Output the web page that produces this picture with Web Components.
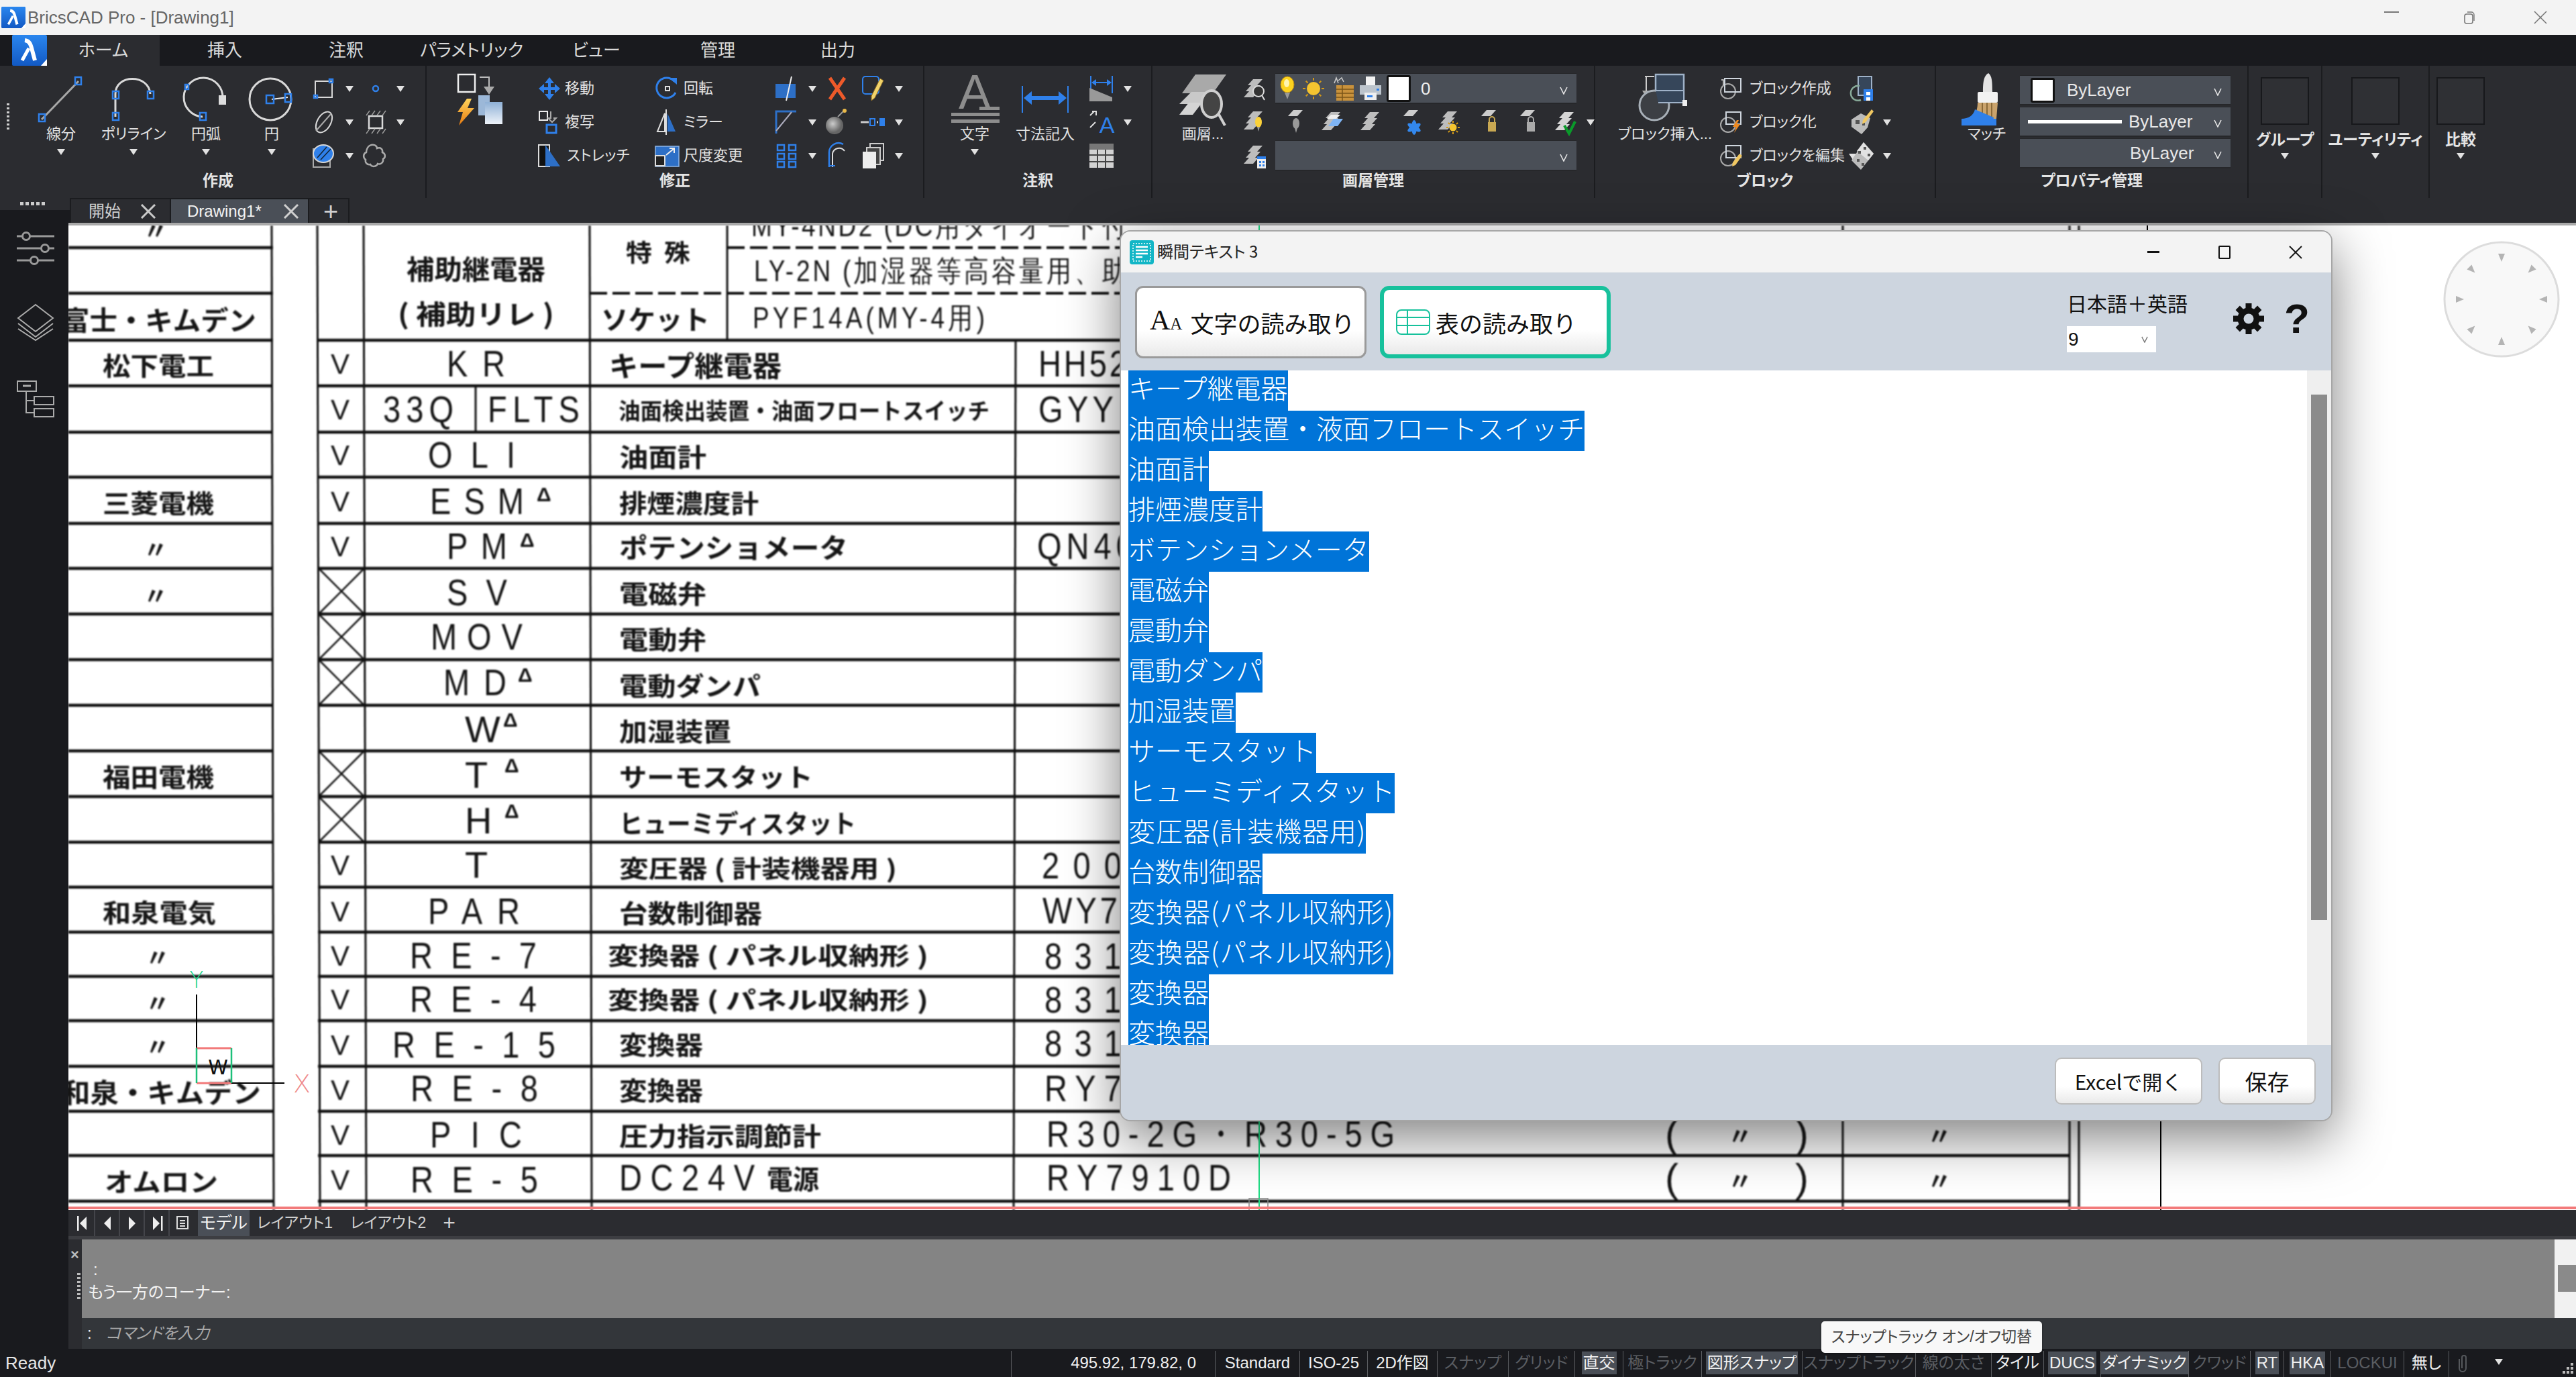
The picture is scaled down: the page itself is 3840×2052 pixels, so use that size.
<!DOCTYPE html>
<html lang="ja"><head><meta charset="utf-8"><title>BricsCAD</title>
<style>html,body{margin:0;padding:0;background:#191a1e}</style></head><body>
<cad-app></cad-app>
<script>
const SANS='"Liberation Sans","Noto Sans CJK JP",sans-serif';
const B='#2f80ea',G='#a8a8a8',W='#d8d8d8',DK='#191a1e';
const hd=(x,y,w=9,h=11,c=B)=>`<rect x="${x}" y="${y}" width="${w}" height="${h}" fill="none" stroke="${c}" stroke-width="2.5"/>`;
const sheet=(x,y,c='#bdbdbd')=>`<path d="M${x+8} ${y}h14l-8 9h-14z" fill="${c}"/>`;
const stack=(c)=>sheet(8,4,c)+sheet(5,13,c)+sheet(2,22,c);
const bulb=(c,x=20,y=12)=>`<ellipse cx="${x}" cy="${y+6}" rx="5" ry="8" fill="${c}"/><path d="M${x-2} ${y+13}h4l-2 7z" fill="#999"/>`;
const sun=(x,y)=>`<circle cx="${x}" cy="${y}" r="5.5" fill="#f4c430"/><g stroke="#d59a16" stroke-width="2">${[0,45,90,135,180,225,270,315].map(a=>`<line x1="${x}" y1="${y-7}" x2="${x}" y2="${y-10}" transform="rotate(${a} ${x} ${y})"/>`).join('')}</g>`;
const lock=(c,x=18,y=16)=>`<rect x="${x-6}" y="${y}" width="12" height="14" fill="${c}"/><path d="M${x-4} ${y}v-4a4 4 0 0 1 8 0v4" fill="none" stroke="${c}" stroke-width="2"/>`;
const ICONS={
line:[72,72,`<line x1="7" y1="66" x2="62" y2="9" stroke="${G}" stroke-width="3"/>${hd(3,58)}${hd(57,3)}`],
pline:[66,72,`<path d="M6 62V28C6-2 56-2 58 28" fill="none" stroke="${W}" stroke-width="3"/>${hd(2,24)}${hd(54,24)}${hd(2,56)}`],
arc:[66,72,`<path d="M28 62A29 29 0 1 1 58 34" fill="none" stroke="${W}" stroke-width="3"/>${hd(2,14,5,7)}${hd(24,56)}<rect x="52" y="30" width="11" height="14" fill="#ddd"/>`],
circle:[72,72,`<circle cx="34" cy="36" r="31" fill="none" stroke="${W}" stroke-width="3"/><line x1="36" y1="36" x2="60" y2="33" stroke="#eee" stroke-width="2"/>${hd(28,30,11,12)}${hd(56,28,9,12)}`],
rect:[34,32,`<rect x="4" y="5" width="25" height="24" fill="none" stroke="${W}" stroke-width="2"/>${hd(25,2,5,5)}${hd(2,26,5,4)}`],
point:[20,32,`<circle cx="10" cy="16" r="4" fill="none" stroke="${B}" stroke-width="2.5"/>`],
ell:[36,36,`<ellipse cx="18" cy="18" rx="17" ry="10" transform="rotate(-60 18 18)" fill="none" stroke="${W}" stroke-width="2"/><line x1="6" y1="31" x2="29" y2="5" stroke="#aaa" stroke-width="2"/>`],
hb:[36,36,`<rect x="8" y="9" width="20" height="18" fill="none" stroke="${W}" stroke-width="2.5"/><g stroke="#999" stroke-width="1.5"><path d="M4 8l5-7M12 8l5-7M20 8l5-7M28 8l5-7M4 35l5-7M12 35l5-7M20 35l5-7M28 35l5-7"/></g>`],
hatch:[36,38,`<rect x="2" y="9" width="25" height="27" fill="none" stroke="#aaa" stroke-width="2"/><ellipse cx="17" cy="16" rx="15" ry="13" fill="${B}" stroke="${W}" stroke-width="2"/><g stroke="#123" stroke-width="1.5"><path d="M8 22L22 6M13 25L28 9"/></g>`],
cloud:[38,36,`<path d="M10 3c6-3 11 0 11 4 5-2 9 1 8 6 5 2 5 8 1 10 1 5-4 9-8 7-2 5-9 5-11 1-5 1-8-3-7-7-4-3-4-9 1-11 0-5 3-9 5-10z" fill="none" stroke="#aaa" stroke-width="2.5"/>`],
quick:[92,78,`<defs><linearGradient id="d" x2="0" y2="1"><stop offset="0" stop-color="#8fb1d6"/><stop offset="1" stop-color="#eef3f9"/></linearGradient><linearGradient id="o" x2="0" y2="1"><stop offset="0" stop-color="#ffd45c"/><stop offset="1" stop-color="#e77a10"/></linearGradient></defs><rect x="4" y="2" width="25" height="26" fill="none" stroke="#eee" stroke-width="2.5"/><path d="M36 6h14v14" fill="none" stroke="#bbb" stroke-width="2"/><path d="M42 20h16l-8 12z" fill="#aaa"/><path d="M17 38L3 58h8L5 78 28 52H18l6-14z" fill="url(#o)"/><rect x="34" y="33" width="17" height="30" fill="#9cb8d8"/><rect x="44" y="43" width="26" height="33" fill="url(#d)"/>`],
move:[34,36,`<path d="M17 1l7 9h-5v6h6v-5l8 7-8 7v-5h-6v6h5l-7 9-7-9h5v-6H9v5l-8-7 8-7v5h6v-6h-5z" fill="${B}"/>`],
copy:[36,36,`<rect x="3" y="2" width="12" height="13" fill="none" stroke="#eee" stroke-width="2"/><path d="M20 2v10h-4l6 6 6-6h-4" fill="none" stroke="#aaa" stroke-width="2"/><rect x="14" y="22" width="14" height="12" fill="none" stroke="${B}" stroke-width="3"/>`],
stretch:[36,36,`<rect x="2" y="2" width="16" height="32" fill="#111" stroke="#ddd" stroke-width="2"/><path d="M12 2l22 32H12z" fill="#2d6fc6"/>`],
rotate:[36,36,`<path d="M28 7A15 15 0 1 0 30 24" fill="none" stroke="${B}" stroke-width="3"/><path d="M20 2h12v10z" fill="${B}"/><rect x="15" y="15" width="6" height="6" fill="none" stroke="#ddd" stroke-width="2"/>`],
mirror:[36,38,`<path d="M14 6L3 33h11z" fill="none" stroke="#ddd" stroke-width="2"/><path d="M18 6l12 27H18z" fill="#2d6fc6"/><line x1="16" y1="0" x2="16" y2="38" stroke="#ddd" stroke-width="2"/>`],
scale:[38,36,`<rect x="1" y="4" width="35" height="30" fill="#2d6fc6" stroke="#8fb6e8" stroke-width="1.5"/><rect x="1" y="18" width="14" height="15" fill="#222" stroke="#ddd" stroke-width="2"/><path d="M17 17l11-9M22 7h7v7" fill="none" stroke="#eee" stroke-width="2"/>`],
trim:[38,38,`<rect x="2" y="12" width="30" height="21" fill="#2d6fc6"/><line x1="26" y1="1" x2="18" y2="37" stroke="#eee" stroke-width="2"/>`],
fillet:[38,38,`<path d="M3 36V3h30" fill="none" stroke="#2d6fc6" stroke-width="3"/><line x1="3" y1="32" x2="26" y2="4" stroke="#aab" stroke-width="2"/>`],
array:[32,36,[2,15,27].map(y=>`<rect x="2" y="${y}" width="10" height="8" fill="none" stroke="${B}" stroke-width="2.5"/><rect x="19" y="${y}" width="10" height="8" fill="none" stroke="${B}" stroke-width="2.5"/>`).join('')],
erase:[34,38,`<path d="M6 3l22 32M28 3L6 35" stroke="#ee5a2a" stroke-width="5" fill="none"/>`],
bomb:[34,40,`<defs><radialGradient id="b" cx=".4" cy=".4"><stop offset="0" stop-color="#ccc"/><stop offset="1" stop-color="#666"/></radialGradient></defs><circle cx="13" cy="25" r="13" fill="url(#b)"/><path d="M18 12l8-8" stroke="#999" stroke-width="2"/><circle cx="28" cy="3" r="3" fill="#e9b949"/>`],
dashd:[38,20,`<path d="M0 10h12M24 10h2" stroke="#ccc" stroke-width="3"/><rect x="14" y="5" width="7" height="10" fill="none" stroke="${B}" stroke-width="2"/><rect x="28" y="4" width="8" height="12" fill="${B}"/>`],
offset:[30,38,`<path d="M8 36V16a10 10 0 0 1 18-4" fill="none" stroke="#ddd" stroke-width="2"/><path d="M3 36V14A14 14 0 0 1 24 2" fill="none" stroke="${B}" stroke-width="2.5"/><path d="M3 34h9" stroke="${B}" stroke-width="2"/>`],
pencil:[36,40,`<rect x="2" y="2" width="24" height="26" rx="4" fill="none" stroke="${B}" stroke-width="2"/><path d="M28 5l5 3-13 26-5 4 0-7z" fill="#f1d36a" stroke="#8a6a28"/>`],
docs:[38,38,`<rect x="14" y="1" width="20" height="25" fill="none" stroke="#ccc" stroke-width="2"/><rect x="9" y="7" width="20" height="25" fill="#444" stroke="#ccc" stroke-width="2"/><rect x="3" y="13" width="20" height="25" fill="#eee"/>`],
bigA:[76,76,`<text x="38" y="52" text-anchor="middle" font-family="Liberation Sans" font-size="72" fill="#8d8d8d">A</text><rect x="45" y="49" width="30" height="5" fill="#8d8d8d"/><rect x="3" y="58" width="72" height="5" fill="#8d8d8d"/><rect x="3" y="68" width="72" height="5" fill="#8d8d8d"/>`],
dim:[76,40,`<path d="M4 0v40M72 0v40" stroke="${B}" stroke-width="2"/><path d="M6 18L18 8v7h40V8l12 10-12 10v-7H18v7z" fill="${B}"/>`],
dims:[40,38,`<path d="M4 0v26M36 0v26" stroke="${B}" stroke-width="2"/><path d="M5 10l7-5v4h16V5l7 5-7 5v-4H12v4z" fill="${B}"/><path d="M2 18l34 14v6H2z" fill="#999"/>`],
dimA:[40,40,`<text x="28" y="36" text-anchor="middle" font-family="Liberation Sans" font-size="34" fill="${B}">A</text><path d="M3 10l6-6M6 4h6v6M3 28l8-8" stroke="#ddd" stroke-width="2" fill="none"/>`],
table:[38,38,`<rect x="1" y="1" width="36" height="36" fill="#d2d2d2"/><rect x="1" y="1" width="36" height="9" fill="#777"/><path d="M1 18h36M1 28h36M13 10v27M25 10v27" stroke="#444" stroke-width="2"/>`],
layerbig:[74,78,`<path d="M26 2h46L52 30H6z" fill="#a9a9a9"/><path d="M20 28h34L38 46H2z" fill="#c9c9c9"/><path d="M16 44h20L22 62H2z" fill="#d4d4d4"/><ellipse cx="50" cy="46" rx="15" ry="20" fill="#444" stroke="#cfcfcf" stroke-width="4"/><path d="M60 60l10 18" stroke="#cfcfcf" stroke-width="4"/>`],
lsearch:[36,36,stack('#bdbdbd')+`<circle cx="24" cy="22" r="8" fill="#333" stroke="#ddd" stroke-width="2"/><path d="M29 28l4 7" stroke="#ddd" stroke-width="2"/>`],
lbulb:[36,40,stack('#bdbdbd')+bulb('#fbd13a',24,14)],
gbulb:[36,40,sheet(10,2,'#ccc')+bulb('#999',22,16)],
lblue:[36,38,stack('#bdbdbd')+`<path d="M20 14h14l-8 11H12z" fill="#7fb5f5"/><path d="M16 8h14l-6 6H10z" fill="#eee"/>`],
lplain:[36,38,stack('#bdbdbd')],
lflower:[36,40,sheet(8,2,'#ccc')+[0,60,120].map(a=>`<ellipse cx="24" cy="28" rx="4" ry="11" fill="#3388ee" transform="rotate(${a} 24 28)"/>`).join('')],
lsun:[36,40,stack('#bdbdbd')+sun(24,28)],
llock:[36,40,sheet(8,2,'#ccc')+lock('#c8a852',24,20)],
llockg:[36,40,sheet(8,2,'#ccc')+lock('#aaa',24,20)],
lcheck:[36,38,stack('#d5d5d5')+`<path d="M16 24l7 12 9-18" fill="none" stroke="#0a9a2a" stroke-width="4"/>`],
llist:[36,38,stack('#bdbdbd')+`<rect x="22" y="20" width="13" height="18" fill="#eee"/><rect x="22" y="20" width="13" height="4" fill="#2f80ea"/><path d="M25 27h3v3h-3zM30 27h3v3h-3zM25 32h3v3h-3zM30 32h3v3h-3z" fill="#2f80ea"/>`],
ybulb:[26,36,`<ellipse cx="12" cy="12" rx="10" ry="12" fill="#fcd21f" stroke="#bb8a10"/><ellipse cx="11" cy="10" rx="4" ry="6" fill="#fff5b0"/><path d="M8 24h8l-4 10z" fill="#999"/>`],
csun:[36,36,sun(18,18).replace(/r="5.5"/,'r="10"').replace(/y1="(\d+)"/g,(m,v)=>`y1="${+v-5}"`).replace(/y2="(\d+)"/g,(m,v)=>`y2="${+v-6}"`)],
freeze:[36,36,`<rect x="9" y="13" width="26" height="23" fill="#c9923c"/><path d="M9 19h26M9 25h26M9 31h26M18 13v23" stroke="#7b5618" stroke-width="1.5"/><path d="M6 10l3-8 3 8M12 6l5-4 3 6" fill="none" stroke="#ccc" stroke-width="1.5"/>`],
printer:[34,36,`<rect x="10" y="0" width="14" height="13" fill="#f2f2f2"/><rect x="1" y="13" width="32" height="14" fill="#bcc4cc"/><rect x="8" y="24" width="18" height="11" fill="#eee"/><rect x="26" y="18" width="4" height="3" fill="#2f80ea"/><rect x="12" y="28" width="8" height="3" fill="#2f80ea"/>`],
blockbig:[80,78,`<path d="M10 5h14" stroke="#ccc" stroke-width="2"/><path d="M12 5v24" stroke="#ccc" stroke-width="2"/><path d="M6 26h12l-6 10z" fill="#aaa"/><rect x="26" y="2" width="42" height="40" fill="#36465a" stroke="#9fb2c8" stroke-width="2.5"/><circle cx="24" cy="48" r="22" fill="#3c3f44" stroke="#a8b0b8" stroke-width="3"/><path d="M26 26h42v18H30" fill="#36465a" stroke="#9fb2c8" stroke-width="2"/><rect x="66" y="40" width="7" height="9" fill="#eee"/>`],
bk1:[36,34,`<circle cx="13" cy="21" r="11" fill="none" stroke="#aaa" stroke-width="2"/><rect x="8" y="2" width="24" height="20" fill="none" stroke="#cfd6de" stroke-width="2"/><path d="M3 4h3v8" stroke="#ddd" fill="none" stroke-width="1.5"/>`],
bk2:[36,34,`<circle cx="13" cy="21" r="11" fill="none" stroke="#aaa" stroke-width="2"/><rect x="10" y="2" width="22" height="18" fill="none" stroke="#cfd6de" stroke-width="2"/><path d="M26 14l-6 10h5l-3 9 9-13h-5l3-6z" fill="#ee8a22"/>`],
bk3:[36,34,`<circle cx="13" cy="21" r="11" fill="none" stroke="#aaa" stroke-width="2"/><rect x="10" y="2" width="22" height="18" fill="none" stroke="#cfd6de" stroke-width="2"/><path d="M30 14l4 3-10 14-5 2 1-6z" fill="#f1c862"/>`],
bsave:[36,38,`<rect x="12" y="1" width="20" height="28" fill="#36465a" stroke="#9fb2c8" stroke-width="2"/><path d="M14 15a11 11 0 1 0 2 21" fill="none" stroke="#8a9" stroke-width="2.5"/><rect x="20" y="20" width="14" height="17" fill="#2f80ea"/><rect x="24" y="24" width="6" height="5" fill="#fff"/><rect x="24" y="32" width="6" height="5" fill="#fff"/>`],
bpen:[36,42,`<path d="M2 17l14-9 14 7-4 14-9 10L2 28z" fill="#bbb"/><path d="M8 18h6v6H8z M18 22h4v4h-4z" fill="#555"/><path d="M32 2l3 3-12 16-5 3 1-6z" fill="#f1c862"/>`],
bdice:[36,42,`<path d="M20 1l15 17-19 24L2 28z" fill="#bbb"/><path d="M20 1l15 17-8 10-17-14z" fill="#e2e2e2"/><path d="M12 14h4v4h-4zM20 8h4v4h-4zM26 18h4v4h-4zM10 26h4v4h-4zM17 32h4v4h-4z" fill="#555"/>`],
brush:[80,78,`<path d="M42 0c5 4 6 10 6 28h6v12H28V28h6c0-18 2-24 8-28z" fill="#e4e4e4"/><rect x="26" y="28" width="30" height="16" rx="2" fill="#f2f2f2"/><path d="M26 44h30l-2 24H18c6-8 8-16 8-24z" fill="#caa36c"/><path d="M33 44v20M40 44v22M47 44v22" stroke="#8a6a38" stroke-width="2"/><path d="M2 78v-10c10 0 18-5 20-14l28 12-2 12z" fill="#2f80ea"/><path d="M2 68h52v10H2z" fill="#2f80ea"/>`],
sliders:[56,48,`<g stroke="#999" stroke-width="3" fill="${DK}"><path d="M0 7h56M0 25h56M0 43h56"/><circle cx="14" cy="7" r="5.5"/><circle cx="42" cy="25" r="5.5"/><circle cx="26" cy="43" r="5.5"/></g>`],
layers:[56,56,`<g fill="none" stroke="#aaa" stroke-width="2"><path d="M28 2l26 20-26 20L2 22z"/><path d="M2 30l26 20 26-20" /><path d="M2 38l26 17 26-17"/></g>`],
tree:[56,56,`<g fill="none" stroke="#aaa" stroke-width="2"><rect x="1" y="1" width="28" height="15"/><path d="M9 8h12" stroke-width="3"/><path d="M14 16v32h12M14 30h12"/><rect x="26" y="24" width="29" height="12"/><rect x="26" y="42" width="29" height="12"/></g>`]
};
function def(name,fn){customElements.define(name,class extends HTMLElement{
  constructor(){super();this.attachShadow({mode:'open'})}
  connectedCallback(){this.shadowRoot.innerHTML=fn(this)}
})}
const chev=(w=14,h=12,c='#e8e8e8')=>`<svg width="${w}" height="${h}" viewBox="0 0 14 12"><path d="M2 1l5 10 5-10" fill="none" stroke="${c}" stroke-width="1.6"/></svg>`;
const logo=(w,h)=>`<svg width="${w}" height="${h}" viewBox="0 0 52 46" style="display:block"><defs><linearGradient id="l" x2="0" y2="1"><stop offset="0" stop-color="#2a86ee"/><stop offset="1" stop-color="#1259c4"/></linearGradient></defs><rect width="52" height="46" rx="2" fill="url(#l)"/><path d="M19 8c8 1 9 8 11 15l4 15" fill="none" stroke="#fff" stroke-width="6"/><path d="M25 20L15 38" fill="none" stroke="#fff" stroke-width="5"/><path d="M52 36v10H43z" fill="#fff"/></svg>`;
def('cad-icon',h=>{const i=ICONS[h.getAttribute('name')];return `<style>:host{display:block;line-height:0}svg{display:block;overflow:visible}</style><svg width="${i[0]}" height="${i[1]}" viewBox="0 0 ${i[0]} ${i[1]}">${i[2]}</svg>`});
def('rb-arrow',()=>`<style>:host{display:block;width:0;height:0;border:6.5px solid transparent;border-top:9px solid #e2e2e2;border-bottom:0}</style>`);
def('rb-panel',h=>`<style>:host{display:flex;flex-direction:column;box-sizing:border-box;width:var(--w);height:197px;border-right:2px solid #1b1c1f;flex:none}
.c{display:flex;height:157px;padding-left:var(--pl,0)}
.t{font:700 23px/28px ${SANS};color:#e4e4e4;text-align:center;font-feature-settings:"palt";padding-left:var(--tp,0)}</style>
<div class="c"><slot></slot></div><div class="t">${h.getAttribute('t')||''}</div>`);
def('rb-big',h=>`<style>:host{display:flex;flex-direction:column;align-items:center;width:var(--w);flex:none;padding-top:12px;box-sizing:border-box}
.i{height:76px;display:flex;align-items:center;justify-content:center}
.l{font:22px/28px ${SANS};color:#e2e2e2;white-space:nowrap;font-feature-settings:"palt"}
.a{height:24px;display:flex;align-items:center}</style>
<div class="i"><cad-icon name="${h.getAttribute('name')}"></cad-icon></div><div class="l"><slot></slot></div>${h.hasAttribute('arrow')?'<div class="a"><rb-arrow></rb-arrow></div>':''}`);
def('rb-col',()=>`<style>:host{display:flex;flex-direction:column;padding-top:9px;width:var(--w);flex:none}</style><slot></slot>`);
def('rb-sm',h=>`<style>:host{display:flex;align-items:center;height:50px;flex:none}
.i{width:var(--iw,40px);display:flex;justify-content:center;flex:none}.l{font:22px/28px ${SANS};color:#e2e2e2;white-space:nowrap;margin-left:var(--g,4px);font-feature-settings:"palt"}
.a{width:26px;display:flex;justify-content:center;flex:none}</style>
<div class="i"><cad-icon name="${h.getAttribute('name')}"></cad-icon></div><div class="l"><slot></slot></div>${h.hasAttribute('arrow')?'<div class="a"><rb-arrow></rb-arrow></div>':''}`);
def('rb-combo',h=>`<style>:host{display:flex;align-items:center;box-sizing:border-box;width:var(--w);height:var(--h,46px);background:#4a4f57;border:1px solid #26272a;border-width:1px 0 2px;flex:none;padding:0 12px 0 var(--pl,8px);font:26px/1 ${SANS};color:#e8e8e8;gap:var(--gap,8px)}
.s{margin-left:auto;display:flex;align-items:center;height:20px;padding-top:6px}</style><slot></slot><span class="s">${chev()}</span>`);
def('rb-swatch',h=>`<style>:host{display:block;width:var(--sw,36px);height:var(--sh,40px);flex:none;background:#fff;border:3px solid #111;border-radius:3px;box-sizing:border-box}</style>`);
def('rb-empty',h=>`<style>:host{display:flex;flex-direction:column;align-items:center;width:100%;padding-top:17px}
.b{width:72px;height:71px;background:#2f3034;border:2px solid #17181b;box-sizing:border-box}
.l{font:700 23px/28px ${SANS};color:#e4e4e4;white-space:nowrap;margin-top:8px;font-feature-settings:"palt"}.a{height:16px;display:flex;align-items:center;margin-top:2px}</style>
<div class="b"></div><div class="l"><slot></slot></div><div class="a"><rb-arrow></rb-arrow></div>`);
const rowf='display:flex;align-items:center;height:50px';
def('cad-ribbon',()=>`<style>:host{display:flex;flex-direction:column;background:#2b2c30;height:234px;width:3840px}
.p{display:flex;height:197px;position:relative}.g{position:absolute;left:10px;top:56px;width:4px;height:40px;background:repeating-linear-gradient(#cfcfcf 0 3px,transparent 3px 6px)}
.cb{color:#eee;margin-left:8px}</style>
<div class="p"><div class="g"></div>
<rb-panel t="作成" style="--w:636px;--pl:37px;--tp:16px">
 <rb-big name="line" arrow style="--w:108px">線分</rb-big><rb-big name="pline" arrow style="--w:108px">ポリライン</rb-big><rb-big name="arc" arrow style="--w:108px">円弧</rb-big><rb-big name="circle" arrow style="--w:88px">円</rb-big>
 <div style="width:13px"></div>
 <rb-col style="--w:78px"><rb-sm name="rect" arrow style="--iw:42px"></rb-sm><rb-sm name="ell" arrow style="--iw:42px"></rb-sm><rb-sm name="hatch" arrow style="--iw:42px"></rb-sm></rb-col>
 <rb-col style="--w:80px"><rb-sm name="point" arrow></rb-sm><rb-sm name="hb" arrow></rb-sm><rb-sm name="cloud"></rb-sm></rb-col>
</rb-panel>
<rb-panel t="修正" style="--w:742px;--pl:44px">
 <rb-big name="quick" style="--w:90px"></rb-big><div style="width:30px"></div>
 <rb-col style="--w:175px"><rb-sm name="move" style="--iw:38px">移動</rb-sm><rb-sm name="copy" style="--iw:38px">複写</rb-sm><rb-sm name="stretch" style="--iw:38px;--g:7px">ストレッチ</rb-sm></rb-col>
 <rb-col style="--w:177px"><rb-sm name="rotate">回転</rb-sm><rb-sm name="mirror">ミラー</rb-sm><rb-sm name="scale">尺度変更</rb-sm></rb-col>
 <rb-col style="--w:74px"><rb-sm name="trim" arrow style="--iw:42px"></rb-sm><rb-sm name="fillet" arrow style="--iw:42px"></rb-sm><rb-sm name="array" arrow style="--iw:42px"></rb-sm></rb-col>
 <rb-col style="--w:54px"><rb-sm name="erase" style="--iw:44px"></rb-sm><rb-sm name="bomb" style="--iw:44px"></rb-sm><rb-sm name="offset" style="--iw:44px"></rb-sm></rb-col>
 <rb-col style="--w:70px"><rb-sm name="pencil" arrow style="--iw:43px"></rb-sm><rb-sm name="dashd" arrow style="--iw:43px"></rb-sm><rb-sm name="docs" arrow style="--iw:43px"></rb-sm></rb-col>
</rb-panel>
<rb-panel t="注釈" style="--w:340px;--pl:30px">
 <rb-big name="bigA" arrow style="--w:90px">文字</rb-big><rb-big name="dim" style="--w:120px">寸法記入</rb-big><div style="width:2px"></div>
 <rb-col style="--w:70px"><rb-sm name="dims" arrow style="--iw:44px"></rb-sm><rb-sm name="dimA" arrow style="--iw:44px"></rb-sm><rb-sm name="table" style="--iw:44px"></rb-sm></rb-col>
</rb-panel>
<rb-panel t="画層管理" style="--w:660px;--pl:20px">
 <rb-big name="layerbig" style="--w:110px">画層...</rb-big><div style="width:2px"></div>
 <rb-col style="--w:510px">
  <div style="${rowf}"><rb-sm name="lsearch" style="--iw:40px"></rb-sm><rb-combo style="--w:449px;--pl:6px;margin-left:7px;--gap:7px">
    <cad-icon name="ybulb"></cad-icon><cad-icon name="csun"></cad-icon><cad-icon name="freeze"></cad-icon><cad-icon name="printer"></cad-icon><rb-swatch style="--sw:36px;--sh:40px"></rb-swatch><span class="cb">0</span></rb-combo></div>
  <div style="${rowf};margin-left:-7px">${['lbulb','gbulb','lblue','lplain','lflower','lsun','llock','llockg','lcheck'].map(n=>`<rb-sm name="${n}" style="--iw:54px"></rb-sm>`).join('')}<span style="margin-left:0"><rb-arrow></rb-arrow></span></div>
  <div style="${rowf}"><rb-sm name="llist" style="--iw:40px"></rb-sm><rb-combo style="--w:449px;margin-left:7px"></rb-combo></div>
 </rb-col>
</rb-panel>
<rb-panel t="ブロック" style="--w:508px;--pl:22px">
 <rb-big name="blockbig" style="--w:164px">ブロック挿入...</rb-big>
 <rb-col style="--w:192px"><rb-sm name="bk1" style="--iw:34px;--g:10px">ブロック作成</rb-sm><rb-sm name="bk2" style="--iw:34px;--g:10px">ブロック化</rb-sm><rb-sm name="bk3" style="--iw:34px;--g:10px">ブロックを編集<span style="display:inline-block;margin-left:6px;vertical-align:middle"><rb-arrow></rb-arrow></span></rb-sm></rb-col>
 <rb-col style="--w:70px"><rb-sm name="bsave" style="--iw:40px"></rb-sm><rb-sm name="bpen" arrow style="--iw:40px"></rb-sm><rb-sm name="bdice" arrow style="--iw:40px"></rb-sm></rb-col>
</rb-panel>
<rb-panel t="プロパティ管理" style="--w:466px;--pl:26px">
 <rb-big name="brush" style="--w:99px">マッチ</rb-big>
 <div style="display:flex;flex-direction:column;gap:2px;padding-top:14px">
  <rb-combo style="--w:314px;--h:45px;--pl:16px;--gap:18px"><rb-swatch style="--sw:36px;--sh:37px"></rb-swatch>ByLayer</rb-combo>
  <rb-combo style="--w:314px;--h:45px;--pl:12px;--gap:10px"><span style="width:140px;height:5px;background:#fff;display:block"></span>ByLayer</rb-combo>
  <rb-combo style="--w:314px;--h:45px;--pl:164px">ByLayer</rb-combo>
 </div>
</rb-panel>
<rb-panel style="--w:110px"><rb-empty>グループ</rb-empty></rb-panel>
<rb-panel style="--w:160px"><rb-empty>ユーティリティ</rb-empty></rb-panel>
<div style="width:92px"><rb-empty>比較</rb-empty></div>
</div>
<doc-tabs></doc-tabs>`);
const xi=(c)=>`<svg width="24" height="22" viewBox="0 0 24 22"><path d="M2 1l20 20M22 1L2 21" stroke="${c}" stroke-width="3" fill="none"/></svg>`;
def('doc-tabs',()=>`<style>:host{display:flex;height:37px;font:24px/36px ${SANS};color:#cfcfcf}
.d{width:104px;height:37px;position:relative}.d i{position:absolute;left:30px;top:6px;width:40px;height:5px;background:repeating-linear-gradient(90deg,#ccc 0 5px,transparent 5px 8px)}
.d b{position:absolute;left:0;right:0;top:18px;bottom:0;background:#191a1e}
.t{display:flex;align-items:center;box-sizing:border-box;height:37px;border-top:2px solid #1b1c1f;border-right:2px solid #1b1c1f}
.a{background:#4a4f57;color:#f2f2f2}</style>
<div class="d"><i></i><b></b></div>
<div class="t" style="width:151px;padding-left:26px;gap:29px;border-left:2px solid #1b1c1f">開始 ${xi('#c9c9c9')}</div>
<div class="t a" style="width:206px;padding-left:24px;gap:32px">Drawing1* ${xi('#cfcfcf')}</div>
<div class="t" style="width:60px;justify-content:center;font-size:38px;font-weight:300;padding-left:6px">+</div>`);
def('win-titlebar',()=>`<style>:host{display:flex;align-items:center;height:52px;background:#f3f3f3;font:26px/1 ${SANS};color:#666;padding-left:2px}
.c{margin-left:auto;display:flex}.c div{width:106px;display:flex;justify-content:center}.n{margin-left:3px}</style>
${logo(36,36)}<span class="n">BricsCAD Pro - [Drawing1]</span>
<div class="c"><div style="width:126px"><svg width="22" height="4"><rect width="22" height="2" y="1" fill="#777"/></svg></div>
<div><svg width="20" height="20" viewBox="0 0 20 20"><rect x="3" y="5" width="12" height="14" rx="3" fill="none" stroke="#777" stroke-width="1.6"/><path d="M7 2h6a4 4 0 0 1 4 4v9" fill="none" stroke="#777" stroke-width="1.4"/></svg></div>
<div><svg width="20" height="20" viewBox="0 0 20 20"><path d="M1 1l18 18M19 1L1 19" stroke="#777" stroke-width="1.6"/></svg></div></div>`);
def('menu-tabs',()=>`<style>:host{display:flex;height:46px;background:#191a1e;font:26px/46px ${SANS};color:#dadada;font-feature-settings:"palt"}
.l{margin-left:18px;width:52px}div.t{text-align:center}.a{background:#2b2c30}</style>
<div class="l">${logo(52,46)}</div>
<div class="t a" style="width:168px">ホーム</div><div class="t" style="width:194px">挿入</div><div class="t" style="width:168px">注釈</div><div class="t" style="width:206px">パラメトリック</div><div class="t" style="width:166px">ビュー</div><div class="t" style="width:196px">管理</div><div class="t" style="width:162px">出力</div>`);
def('side-bar',()=>`<style>:host{display:flex;flex-direction:column;gap:59px;width:102px;box-sizing:border-box;padding:13px 0 0 25px;background:#191a1e;flex:none}</style>
<cad-icon name="sliders"></cad-icon><cad-icon name="layers"></cad-icon><cad-icon name="tree"></cad-icon>`);
/* drawing */
const ys=[369,437,507,575,644,711,780,847,915,983,1051,1119,1187,1255,1322,1389,1455,1521,1589,1656,1722,1790];
const JP='"Noto Sans CJK JP",sans-serif',LT='"Liberation Sans",sans-serif';
function tx(s,x1,x2,y,size,o={}){
  const sx=o.sx||1,fam=o.l?LT:JP,w=o.w||(o.l?400:700),adj=o.l?'spacing':'spacingAndGlyphs';
  const tl=s.length>1||!o.l?`textLength="${((x2-x1)/sx).toFixed(1)}" lengthAdjust="${adj}"`:'';
  return `<text transform="translate(${x1} ${y}) scale(${sx} 1)" ${tl} dominant-baseline="central" font-family='${fam}' font-size="${size}" font-weight="${w}">${s}</text>`;
}
const code=(s,a,b,y,sz=56)=>tx(s,a,b,y,sz,{l:1,sx:.84});
const jp=(s,a,b,y,sz=38)=>tx(s,a,b,y,sz);
const ditto=(x,y,sz=36)=>`<text x="${x}" y="${y}" text-anchor="middle" dominant-baseline="central" font-family='${JP}' font-size="${sz}" font-weight="700">〃</text>`;
const tri=(x,y)=>tx('Δ',x,x+24,y,30,{l:1,w:700});
function tableSvg(){
 let l='';
 ys.forEach(y=>{l+=`<line x1="102" y1="${y}" x2="407" y2="${y}" stroke-width="4.5"/>`;
   if(y>=507)l+=`<line x1="474" y1="${y}" x2="3085" y2="${y}" stroke-width="4.5"/>`;});
 l+=`<path d="M1084 369H3085M879 437H3085" stroke-width="4" stroke-dasharray="26 8" fill="none"/>`;
 [[405,408],[473,477],[542,546],[879,882]].forEach(a=>l+=`<line x1="${a[0]}" y1="336" x2="${a[1]}" y2="1803" stroke-width="3"/>`);
 l+=`<line x1="1084" y1="336" x2="1084" y2="505" stroke-width="3"/><line x1="1514" y1="507" x2="1511" y2="1803" stroke-width="3"/><line x1="709" y1="575" x2="709" y2="644" stroke-width="3"/>`;
 [2747,3085,3099].forEach(x=>l+=`<line x1="${x}" y1="336" x2="${x}" y2="1803" stroke-width="3"/>`);
 [[847,915],[915,983],[983,1051],[1119,1187],[1187,1255]].forEach(r=>l+=`<path d="M475 ${r[0]}L543 ${r[1]}M543 ${r[0]}L475 ${r[1]}" stroke-width="2.5" fill="none"/>`);
 let t='';
 t+=ditto(232,341)+jp('富士・キムデン',92,382,475,40)+jp('松下電工',153,319,542)+jp('三菱電機',153,319,747)+ditto(232,816)+ditto(232,885)+jp('福田電機',153,319,1155)+jp('和泉電気',153,322,1357)+ditto(235,1424)+ditto(235,1492)+ditto(235,1557)+jp('和泉・キムデン',92,389,1626,40)+jp('オムロン',156,325,1758);
 [542,610,678,747,814,1289,1358,1424,1489,1557,1624,1691,1758].forEach(y=>t+=`<text x="507" y="${y}" text-anchor="middle" dominant-baseline="central" font-family='${LT}' font-size="42">V</text>`);
 t+=jp('補助継電器',606,813,399,40)+jp('( 補助リレ )',593,826,466,40)+jp('特',933,972,374,36)+jp('殊',990,1029,374,36)+jp('ソケット',896,1058,474,40);
 t+=code('KR',666,753,542)+code('33Q',571,676,610)+code('FLTS',727,864,610)+code('OLI',638,768,678)+code('ESM',641,781,747)+tri(800,736)+code('PM',666,756,814)+tri(775,804)+code('SV',666,756,883)+code('MOV',642,779,949)+code('MD',661,755,1017)+tri(772,1005)+tx('W',693,735,1086,56,{l:1})+tri(750,1072)+tx('T',693,730,1154,56,{l:1})+tri(752,1140)+tx('H',693,730,1222,56,{l:1})+tri(752,1208)+tx('T',693,730,1288,56,{l:1})+code('PAR',638,775,1358)+code('RE-7',611,800,1424)+code('RE-4',611,800,1489)+code('RE-15',585,828,1557)+code('RE-8',612,802,1622)+code('PIC',641,778,1691)+code('RE-5',612,802,1758);
 t+=jp('キープ継電器',908,1165,542,42)+jp('油面検出装置・油面フロートスイッチ',922,1475,610,34)+jp('油面計',923,1053,678)+jp('排煙濃度計',923,1131,747)+jp('ポテンショメータ',923,1264,814,40)+jp('電磁弁',923,1053,882)+jp('電動弁',923,1053,950)+jp('電動ダンパ',923,1134,1019)+jp('加湿装置',923,1090,1087)+jp('サーモスタット',923,1212,1155)+jp('ヒューミディスタット',923,1276,1224)+jp('変圧器 ( 計装機器用 )',923,1337,1292,36)+jp('台数制御器',923,1136,1358)+jp('変換器 ( パネル収納形 )',906,1384,1422,36)+jp('変換器 ( パネル収納形 )',906,1384,1488,36)+jp('変換器',923,1048,1554)+jp('変換器',923,1048,1622)+jp('圧力指示調節計',923,1224,1690)+code('DC24V',923,1125,1755)+jp('電源',1143,1221,1755,40);
 t+=code('MY-4ND2 (DC用ダイオード付',1120,1680,337,44)+code('LY-2N (加湿器等高容量用、助',1124,1680,404,44)+code('PYF14A(MY-4用)',1122,1468,474,44);
 t+=code('HH52',1548,1680,542)+code('GYY',1548,1660,610)+code('QN40',1546,1690,814)+code('200',1553,1672,1290)+code('WY7',1554,1666,1357)+code('831',1557,1672,1425)+code('831',1557,1672,1490)+code('831',1557,1672,1555)+code('RY7',1557,1672,1622)+code('R30-2G・R30-5G',1560,2079,1690)+code('RY7910D',1560,1835,1755);
 t+=`<g font-family='${LT}' font-size="60"><text x="2492" y="1690" text-anchor="middle" dominant-baseline="central">(</text><text x="2686" y="1690" text-anchor="middle" dominant-baseline="central">)</text><text x="2492" y="1755" text-anchor="middle" dominant-baseline="central">(</text><text x="2686" y="1755" text-anchor="middle" dominant-baseline="central">)</text></g>`+ditto(2594,1690)+ditto(2594,1757)+ditto(2891,1690)+ditto(2891,1757);
 return `<g style="filter:blur(1px)" fill="#151515" stroke="#111">${l}<g stroke="none">${t}</g></g>`;
}
def('cad-drawing',()=>`<style>:host{display:block;position:relative;flex:1;background:#fff;overflow:hidden}
svg{display:block;position:absolute;left:0;top:0}
.t{position:absolute;left:0;right:0;top:0;height:4px;background:#a9a9a9}</style>
<svg width="3738" height="1471" viewBox="102 332 3738 1471">${tableSvg()}
 <line x1="3201" y1="336" x2="3201" y2="346" stroke="#000" stroke-width="2"/><line x1="3221" y1="1660" x2="3221" y2="1803" stroke="#000" stroke-width="2"/>
 <line x1="1877" y1="336" x2="1877" y2="1803" stroke="#1fdc84" stroke-width="2"/>
 <rect x="1862" y="1786" width="28" height="18" fill="none" stroke="#888" stroke-width="1.5"/>
 <rect x="102" y="1798" width="3738" height="4" fill="#f27a7a"/>
 <line x1="293" y1="1482" x2="293" y2="1614" stroke="#000" stroke-width="2"/><line x1="345" y1="1614" x2="424" y2="1614" stroke="#000" stroke-width="2"/>
 <path d="M293 1562h52" stroke="#f27a7a" stroke-width="3"/><path d="M293 1614h52" stroke="#f27a7a" stroke-width="3"/><path d="M293 1562v52M345 1562v52" stroke="#1cc07a" stroke-width="2.5" fill="none"/>
 <text x="293" y="1460" text-anchor="middle" dominant-baseline="central" font-family='"DejaVu Sans"' font-weight="200" font-size="34" fill="#22d58a">Y</text>
 <text x="450" y="1615" text-anchor="middle" dominant-baseline="central" font-family='"DejaVu Sans"' font-weight="200" font-size="38" fill="#ef8a8a">X</text>
 <text x="325" y="1590" text-anchor="middle" dominant-baseline="central" font-family='"DejaVu Sans"' font-size="30" fill="#111">W</text>
</svg><div class="t"></div>`);
def('nav-wheel',()=>`<style>:host{display:block;position:absolute;left:3641px;top:358px;width:176px;height:176px}</style>
<svg width="176" height="176" viewBox="0 0 176 176"><circle cx="88" cy="88" r="85" fill="#f8f8f8" stroke="#dcdcdc" stroke-width="3"/>
${[0,45,90,135,180,225,270,315].map(a=>`<path d="M83 20h10l-5 12z" fill="#b4b4b4" transform="rotate(${a} 88 88)"/>`).join('')}</svg>`);
def('layout-tabs',()=>{const nb=(p,b)=>`<div class="n"><svg width="22" height="24" viewBox="0 0 22 24">${b?`<rect x="${b}" y="1" width="2.5" height="22" fill="#eee"/>`:''}<path d="${p}" fill="#eee"/></svg></div>`;
 return `<style>:host{display:flex;height:39px;background:#2b2c30;font:23px/39px ${SANS};color:#d2d2d2;font-feature-settings:"palt";padding-left:3px;flex:none;box-sizing:border-box;align-items:stretch}
.n{width:37px;display:flex;align-items:center;justify-content:center;border-right:2px solid #44454a;box-sizing:border-box}
.i{width:42px;display:flex;align-items:center;justify-content:center;padding-right:5px;box-sizing:border-box}
.a{background:#4a4f57;color:#f2f2f2;width:77px;text-align:center;font-size:25px}</style>
${nb('M17 2v20L7 12z',3)}${nb('M16 2v20L6 12z')}${nb('M6 2v20l10-10z')}${nb('M5 2v20l10-10z',17)}
<div class="i"><svg width="20" height="24" viewBox="0 0 20 24"><rect x="2" y="2" width="16" height="18" fill="none" stroke="#ddd" stroke-width="2"/><path d="M6 8h8M6 12h8M6 16h8" stroke="#ddd" stroke-width="2"/></svg></div>
<div class="a">モデル</div><div style="margin-left:11px">レイアウト1</div><div style="margin-left:26px">レイアウト2</div><div style="margin-left:25px;font-size:32px;font-weight:300">+</div>`});
def('cmd-line',()=>`<style>:host{display:grid;grid-template-columns:20px 1fr;grid-template-rows:117px 46px;height:163px;border-top:5px solid #3d3e42;box-sizing:content-box;font:24px/34px ${SANS};flex:none;background:#2b2c30;font-feature-settings:"palt"}
.s{grid-row:1 / 3;position:relative;background:#2b2c30}
.s i{position:absolute;left:3px;top:12px;color:#bbb;font:700 22px/22px ${SANS};font-style:normal}.s b{position:absolute;left:13px;top:50px;width:5px;height:40px;background:repeating-linear-gradient(#bbb 0 3px,transparent 3px 6px)}
.o{background:#848484;color:#f2f2f2;padding:28px 0 0 9px;position:relative;overflow:hidden}
.o .sb{position:absolute;right:0;top:0;bottom:0;width:32px;background:#f1f1f1}.o .sb i{position:absolute;left:5px;right:0;top:38px;height:40px;background:#8a8a8a}
.p{background:#33363a;color:#f2f2f2;display:flex;align-items:center;padding-left:8px;gap:21px}.p em{color:#a9a9a9;font-size:24px}</style>
<div class="s"><i>×</i><b></b></div>
<div class="o"><div style="padding-left:8px">:</div><div>もう一方のコーナー:</div><div class="sb"><i></i></div></div>
<div class="p"><span>:</span><em>コマンドを入力</em></div>`);
def('st-item',h=>{const k=h.getAttribute('k')||'';return `<style>:host{display:flex;align-items:center;justify-content:${k=='r'?'flex-end':'center'};width:var(--w);box-sizing:border-box;border-left:1px solid #5a5c60;height:39px;margin-top:3px;flex:none;white-space:nowrap;padding-right:${k=='r'?'26px':'0'}}
span{display:block;line-height:34px;height:34px;margin-top:-3px;padding:0 2px;color:${k=='d'?'#5a5d62':'#f0f0f0'};${k=='o'?'background:#4a4f57;':''}}</style><span><slot></slot></span>`});
def('status-bar',()=>{const it=[['495.92, 179.82, 0',304,'r'],['Standard',126],['ISO-25',101],['2D作図',104],['スナップ',106,'d'],['グリッド',99,'d'],['直交',72,'o'],['極トラック',117,'d'],['図形スナップ',150,'o'],['スナップトラック',169,'d'],['線の太さ',113,'d'],['タイル',78],['DUCS',85,'o'],['ダイナミック',131,'o'],['クワッド',92,'d'],['RT',50,'o'],['HKA',70,'o'],['LOCKUI',109,'d'],['無し',67]];
 return `<style>:host{display:flex;height:42px;background:#191a1e;font:24px/1 ${SANS};color:#e6e6e6;font-feature-settings:"palt";position:relative}
.r{width:1507px;padding-left:8px;box-sizing:border-box;line-height:42px;font-size:26px;flex:none}
.x{display:flex;align-items:center;border-left:1px solid #5a5c60;height:39px;margin-top:3px;flex:1;position:relative}
.x svg{position:absolute}</style><div class="r">Ready</div>
${it.map(a=>`<st-item k="${a[2]||''}" style="--w:${a[1]}px">${a[0]}</st-item>`).join('')}
<div class="x"><svg style="left:12px;top:4px" width="16" height="30" viewBox="0 0 16 30"><path d="M3 8v14a5 5 0 0 0 10 0V6a3 3 0 0 0-6 0v16" fill="none" stroke="#55585c" stroke-width="2"/></svg>
<span style="position:absolute;left:68px;top:12px"><rb-arrow></rb-arrow></span>
<svg style="right:0;top:16px" width="22" height="22" viewBox="0 0 22 22" fill="#bbb"><path d="M14 2h4v4h-4zM14 8h4v4h-4zM8 8h4v4H8zM14 14h4v4h-4zM8 14h4v4H8zM2 14h4v4H2z"/></svg></div>`});
def('cad-tooltip',()=>`<style>:host{position:absolute;left:2715px;top:1969px;width:329px;height:47px;background:#f8f8f8;border-radius:5px;box-shadow:0 1px 3px rgba(0,0,0,.4);font:23px/47px ${SANS};color:#444;text-align:center;font-feature-settings:"palt";white-space:nowrap}</style><slot></slot>`);
def('ocr-button',h=>`<style>:host{display:flex;align-items:center;box-sizing:border-box;width:var(--w);height:var(--h,108px);border:var(--b,3px) solid var(--c,#9a9a9a);border-radius:var(--r,12px);background:linear-gradient(#fff 62%,#e9e9e9);font:var(--f,35px)/1 "Noto Sans CJK JP",sans-serif;color:#111;padding-left:var(--pl,19px);gap:var(--g,12px);white-space:nowrap;flex:none;justify-content:var(--j,flex-start)}</style><slot></slot>`);
def('ocr-dialog',()=>{const rows=['キープ継電器','油面検出装置・液面フロートスイッチ','油面計','排煙濃度計','ボテンションメータ','電磁弁','震動弁','電動ダンパ','加湿装置','サーモスタット','ヒューミディスタット','変圧器(計装機器用)','台数制御器','変換器(パネル収納形)','変換器(パネル収納形)','変換器','変換器'];
 return `<style>:host{position:absolute;left:1669px;top:343px;width:1808px;height:1328px;display:flex;flex-direction:column;box-sizing:border-box;border:2px solid #a6a6a6;border-radius:16px;box-shadow:0 24px 80px rgba(0,0,0,.5);background:#cdd5df;font-family:"Noto Sans CJK JP",sans-serif}
.ti{display:flex;align-items:center;height:61px;background:#f3f3f3;border-radius:14px 14px 0 0;padding-left:13px;gap:5px;font:24px/1 "Noto Sans CJK JP",sans-serif;color:#222;font-feature-settings:"palt";flex:none}
.ti>span{margin-top:-3px}
.ct{margin-left:auto;display:flex}.ct div{width:106px;display:flex;justify-content:center;align-items:center}
.tb{display:flex;height:146px;padding:20px 31px 0 21px;box-sizing:border-box;gap:20px;background:#cdd5df;flex:none}
.lg{margin-left:auto;display:flex;flex-direction:column;width:180px;padding-top:7px;gap:17px;font-size:30px;line-height:36px;color:#111;white-space:nowrap;margin-right:47px}
.sel{width:133px;height:39px;background:#fff;display:flex;align-items:center;justify-content:space-between;padding:0 10px 0 2px;box-sizing:border-box;font:28px/39px "Liberation Sans",sans-serif}
.gear{margin-top:25px;flex:none}.q{font:700 62px/48px "Liberation Sans",sans-serif;color:#111;margin-top:25px;width:40px;text-align:center;margin-left:8px}
.tx{flex:1;background:#fff;position:relative;overflow:hidden;padding-left:11px;min-height:0}
.tx span{display:block;width:fit-content;height:60px;background:#0074d8;color:#fff;font:300 40px/51px "Noto Sans CJK JP",sans-serif;white-space:nowrap}
.tx span.p{letter-spacing:.9px}
.sb{position:absolute;right:0;top:0;bottom:0;width:36px;background:#efefef}.sb i{position:absolute;left:6px;width:24px;top:36px;height:783px;background:#8b8b8b}
.ft{height:112px;flex:none;display:flex;justify-content:flex-end;align-items:flex-start;gap:24px;padding:19px 23px 0 0;box-sizing:border-box;background:#cdd5df;border-radius:0 0 14px 14px}
.a{font:400 42px/40px "Liberation Serif",serif}.a small{font-size:25px}</style>
<div class="ti"><svg width="36" height="36" viewBox="0 0 36 36"><rect width="36" height="36" rx="4" fill="#12b6c6"/><rect x="5" y="5" width="26" height="26" fill="none" stroke="#fff" stroke-width="1.5" stroke-dasharray="2 2"/><path d="M9 10h18M9 15h18M9 20h18M9 25h10" stroke="#fff" stroke-width="2.5"/></svg><span>瞬間テキスト 3</span>
<div class="ct"><div><svg width="18" height="3"><rect width="18" height="3" fill="#111"/></svg></div><div><svg width="18" height="20" viewBox="0 0 18 20"><rect x="1" y="1" width="16" height="18" rx="1" fill="none" stroke="#111" stroke-width="2"/></svg></div><div><svg width="20" height="20" viewBox="0 0 20 20"><path d="M1 1l18 18M19 1L1 19" stroke="#111" stroke-width="1.8"/></svg></div></div></div>
<div class="tb"><ocr-button style="--w:345px"><span class="a">A<small>A</small></span>文字の読み取り</ocr-button>
<ocr-button style="--w:344px;--b:6px;--c:#17c19c;--r:14px;--pl:18px;--g:8px"><svg width="51" height="38" viewBox="0 0 51 38"><rect x="1" y="1" width="49" height="36" rx="7" fill="#fff" stroke="#17c19c" stroke-width="2"/><path d="M1 12h49M1 24h49M17 1v36" stroke="#17c19c" stroke-width="2"/></svg>表の読み取り</ocr-button>
<div class="lg"><div>日本語＋英語</div><div class="sel">9 ${chev(14,10,'#777')}</div></div>
<svg class="gear" width="48" height="48" viewBox="0 0 48 48"><circle cx="24" cy="24" r="12" fill="none" stroke="#111" stroke-width="9"/>${[0,45,90,135,180,225,270,315].map(a=>`<rect x="19.5" y="1" width="9" height="10" fill="#111" transform="rotate(${a} 24 24)"/>`).join('')}</svg><div class="q">?</div></div>
<div class="tx">${rows.map(r=>`<span class="${r.includes('(')?'p':''}">${r}</span>`).join('')}<div class="sb"><i></i></div></div>
<div class="ft"><ocr-button style="--w:220px;--h:70px;--f:30px;--b:2px;--c:#bcbcbc;--r:10px;--pl:0;--j:center">Excelで開く</ocr-button><ocr-button style="--w:145px;--h:70px;--f:33px;--b:2px;--c:#bcbcbc;--r:10px;--pl:0;--j:center">保存</ocr-button></div>`});
def('cad-app',()=>`<style>:host{display:grid;position:relative;overflow:hidden;width:3840px;height:2052px;grid-template-rows:52px 46px 234px 1fr 42px;background:#191a1e;font-family:${SANS}}
.m{display:flex;min-height:0}.r{flex:1;display:flex;flex-direction:column;min-width:0}</style>
<win-titlebar></win-titlebar><menu-tabs></menu-tabs><cad-ribbon></cad-ribbon>
<div class="m"><side-bar></side-bar><div class="r"><cad-drawing></cad-drawing><layout-tabs></layout-tabs><cmd-line></cmd-line></div></div>
<status-bar></status-bar>
<nav-wheel></nav-wheel><ocr-dialog></ocr-dialog><cad-tooltip>スナップトラック オン/オフ切替</cad-tooltip>`);
</script></body></html>
